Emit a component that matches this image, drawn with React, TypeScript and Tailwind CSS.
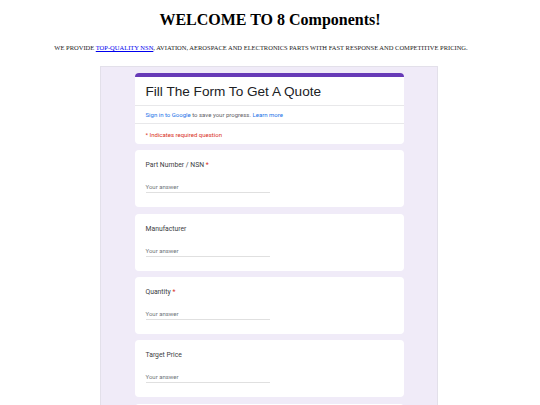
export default function App() {
  const questions = [
    { label: "Part Number / NSN", required: true },
    { label: "Manufacturer", required: false },
    { label: "Quantity", required: true },
    { label: "Target Price", required: false },
  ];

  return (
    <div className="h-[405px] overflow-hidden bg-white font-['Liberation_Serif',serif] text-black">
      <h1 className="pt-[11px] text-center text-[16px] font-bold leading-[18px]">
        WELCOME TO 8 Components!
      </h1>
      <p className="mt-[15px] pr-[18px] text-center text-[6.5px] leading-[8px] text-[#222]">
        WE PROVIDE{" "}
        <a href="#" className="text-[#0000ee] underline">
          TOP-QUALITY NSN
        </a>
        , AVIATION, AEROSPACE AND ELECTRONICS PARTS WITH FAST RESPONSE AND COMPETITIVE PRICING.
      </p>

      {/* embedded form */}
      <div className="ml-[100px] mt-[14px] h-[400px] w-[338px] border border-[#e3e0ea] bg-[#f0ebf8] pt-[6px] font-['Roboto','Liberation_Sans',sans-serif]">
        <div className="mx-auto flex w-[269px] flex-col gap-[6.33px]">
          <div className="overflow-hidden rounded-[4px] bg-white">
            <div className="h-[4px] bg-[#673ab7]"></div>
            <div className="flex h-[29px] items-center border-b border-[#e8e8ea] px-[11px] pt-[1px]">
              <span className="text-[13.6px] leading-none text-[#202124] font-['Liberation_Sans',sans-serif]">
                Fill The Form To Get A Quote
              </span>
            </div>
            <div className="flex h-[18px] items-center border-b border-[#e8e8ea] px-[11px] text-[6px] text-[#5f6368]">
              <span className="text-[#1a73e8]">Sign in to Google</span>
              <span>&nbsp;to save your progress.&nbsp;</span>
              <span className="text-[#1a73e8]">Learn more</span>
            </div>
            <div className="flex h-[20px] items-center px-[11px] text-[6px] text-[#d93025]">
              * Indicates required question
            </div>
          </div>

          {questions.map((q) => (
            <div key={q.label} className="h-[57px] rounded-[4px] bg-white px-[11px] pt-[11px]">
              <div className="text-[6.8px] leading-[9px] text-[#3c4043]">
                {q.label}
                {q.required && <span className="text-[#d93025]"> *</span>}
              </div>
              <div className="mt-[13px] w-[124px] border-b border-[#e0e0e0] pb-[2px] text-[6px] leading-[7px] text-[#70757a]">
                Your answer
              </div>
            </div>
          ))}
          {/* next question card, below the fold */}
          <div className="h-[57px] rounded-[4px] bg-white"></div>
        </div>
      </div>
    </div>
  );
}
